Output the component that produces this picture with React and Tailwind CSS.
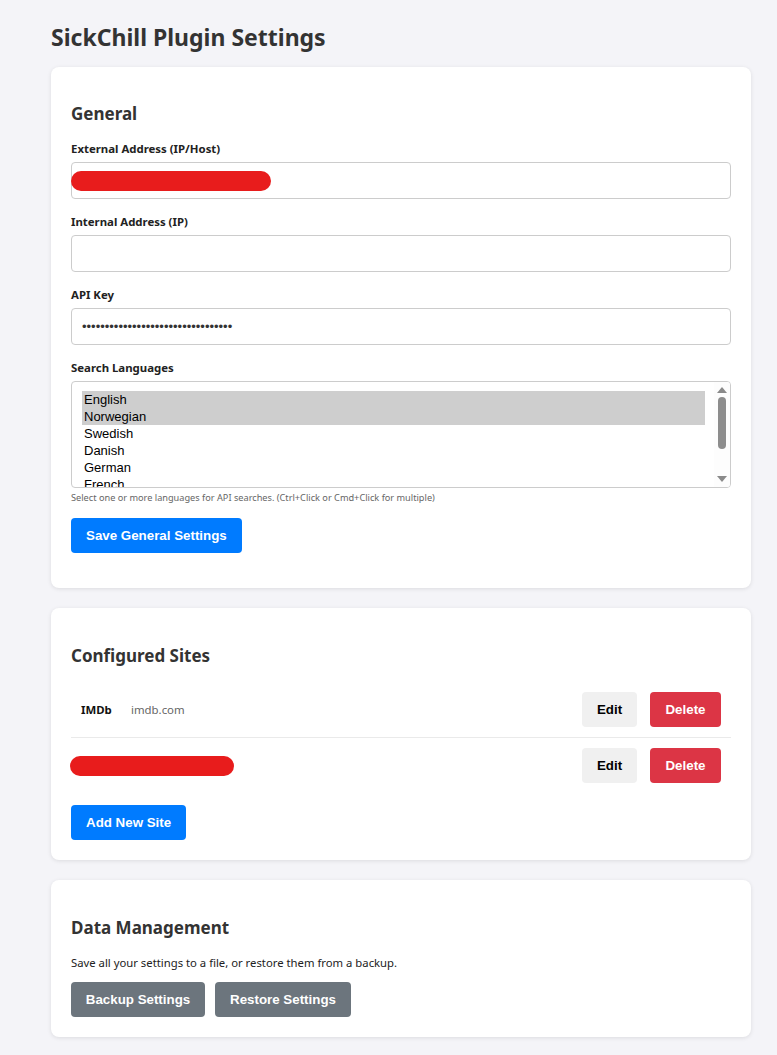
import React from 'react';

const languages = ['English', 'Norwegian', 'Swedish', 'Danish', 'German', 'French'];
const selected = ['English', 'Norwegian'];

const sans = { fontFamily: '"Noto Sans", "Open Sans", sans-serif' };

const Field = ({ label, children }) => (
    <div className="mb-[15px]">
        <label className="block text-[11.4px] leading-[16px] font-bold text-[#222] mb-[5px]">{label}</label>
        {children}
    </div>
);

const Redacted = ({ width }) => (
    <div className="h-[20px] rounded-full bg-[#e81c1c]" style={{ width }} />
);

const SiteRow = ({ name, domain, redacted, last }) => (
    <div className={`flex items-center justify-between py-[10px] ${last ? '' : 'border-b border-[#eaeaea]'}`}>
        {redacted ? (
            <div className="-ml-px">
                <Redacted width={164} />
            </div>
        ) : (
            <div className="flex items-center pl-[10px] text-[11.4px]">
                <span className="font-bold text-[#111] w-[50px]">{name}</span>
                <span className="text-[#666]">{domain}</span>
            </div>
        )}
        <div className="flex gap-[13px] pr-[10px]">
            <button className="h-[35px] w-[55px] rounded bg-[#f0f0f0] text-[13.33px] font-bold text-black font-['Liberation_Sans',Arial,sans-serif]">Edit</button>
            <button className="h-[35px] w-[71px] rounded bg-[#dc3545] text-[13.33px] font-bold text-white font-['Liberation_Sans',Arial,sans-serif]">Delete</button>
        </div>
    </div>
);

export default function App() {
    return (
        <div className="min-h-[1055px] bg-[#f4f4f8] px-[51px] pt-[22px] pb-[20px] text-[#333]" style={sans}>
            <h1 className="text-[23px] leading-[30px] font-bold text-[#333] mb-[15px]">SickChill Plugin Settings</h1>

            <div className="w-[700px] bg-white rounded-lg shadow-[0_1px_4px_rgba(0,0,0,0.1)] px-[20px] pt-[20px] pb-[35px] mb-[20px]">
                <h2 className="text-[17px] leading-[22px] font-bold text-[#333] mt-[16px] mb-[16px]">General</h2>

                <Field label="External Address (IP/Host)">
                    <div className="h-[37px] w-full rounded border border-[#ccc] flex items-center">
                        <div className="-ml-px">
                            <Redacted width={200} />
                        </div>
                    </div>
                </Field>

                <Field label="Internal Address (IP)">
                    <input type="text" className="block h-[37px] w-full rounded border border-[#ccc] px-[10px] text-[13px] outline-none" />
                </Field>

                <Field label="API Key">
                    <input
                        type="password"
                        defaultValue="abcdefghijklmnopqrstuvwxyz0123456"
                        className="block h-[37px] w-full rounded border border-[#ccc] px-[10px] text-[13px] outline-none font-['Liberation_Sans',Arial,sans-serif]"
                    />
                </Field>

                <div className="mb-[14px]">
                    <label className="block text-[11.4px] leading-[16px] font-bold text-[#222] mb-[5px]">Search Languages</label>
                    <div className="relative h-[107px] w-full rounded border border-[#ccc] overflow-hidden">
                        <div className="pl-[10px] pr-[25px] pt-[9px] font-['Liberation_Sans',Arial,sans-serif] text-[13px] leading-[17px] text-black">
                            {languages.map((lang) => (
                                <div key={lang} className={`px-[2px] ${selected.includes(lang) ? 'bg-[#cecece]' : ''}`}>{lang}</div>
                            ))}
                        </div>
                        <div className="absolute right-0 top-0 bottom-0 w-[16px] bg-[#fdfdfd] flex flex-col items-center">
                            <svg width="10" height="6" viewBox="0 0 10 6" className="mt-[5px]"><path d="M5 0 L10 6 L0 6 Z" fill="#8a8a8a" /></svg>
                            <div className="w-[8px] h-[52px] rounded-full bg-[#8d8d8d] mt-[4px]" />
                            <div className="flex-1" />
                            <svg width="10" height="6" viewBox="0 0 10 6" className="mb-[5px]"><path d="M0 0 L10 0 L5 6 Z" fill="#8a8a8a" /></svg>
                        </div>
                    </div>
                    <p className="mt-[3px] text-[9.2px] leading-[13px] text-[#666]">Select one or more languages for API searches. (Ctrl+Click or Cmd+Click for multiple)</p>
                </div>

                <button className="h-[35px] px-[15px] rounded bg-[#007bff] text-white text-[13.33px] font-bold font-['Liberation_Sans',Arial,sans-serif]">Save General Settings</button>
            </div>

            <div className="w-[700px] bg-white rounded-lg shadow-[0_1px_4px_rgba(0,0,0,0.1)] px-[20px] pt-[20px] pb-[20px] mb-[20px]">
                <h2 className="text-[17px] leading-[22px] font-bold text-[#333] mt-[17px] mb-[15px]">Configured Sites</h2>
                <SiteRow name="IMDb" domain="imdb.com" />
                <SiteRow redacted last />
                <button className="mt-[12px] h-[35px] px-[15px] rounded bg-[#007bff] text-white text-[13.33px] font-bold font-['Liberation_Sans',Arial,sans-serif]">Add New Site</button>
            </div>

            <div className="w-[700px] bg-white rounded-lg shadow-[0_1px_4px_rgba(0,0,0,0.1)] px-[20px] pt-[20px] pb-[20px]">
                <h2 className="text-[17px] leading-[22px] font-bold text-[#333] mt-[17px] mb-[15px]">Data Management</h2>
                <p className="text-[11.3px] leading-[18px] text-[#222] mb-[10px]">Save all your settings to a file, or restore them from a backup.</p>
                <div className="flex gap-[10px]">
                    <button className="h-[35px] w-[134px] rounded bg-[#6c757d] text-white text-[13.33px] font-bold font-['Liberation_Sans',Arial,sans-serif]">Backup Settings</button>
                    <button className="h-[35px] w-[136px] rounded bg-[#6c757d] text-white text-[13.33px] font-bold font-['Liberation_Sans',Arial,sans-serif]">Restore Settings</button>
                </div>
            </div>
        </div>
    );
}
